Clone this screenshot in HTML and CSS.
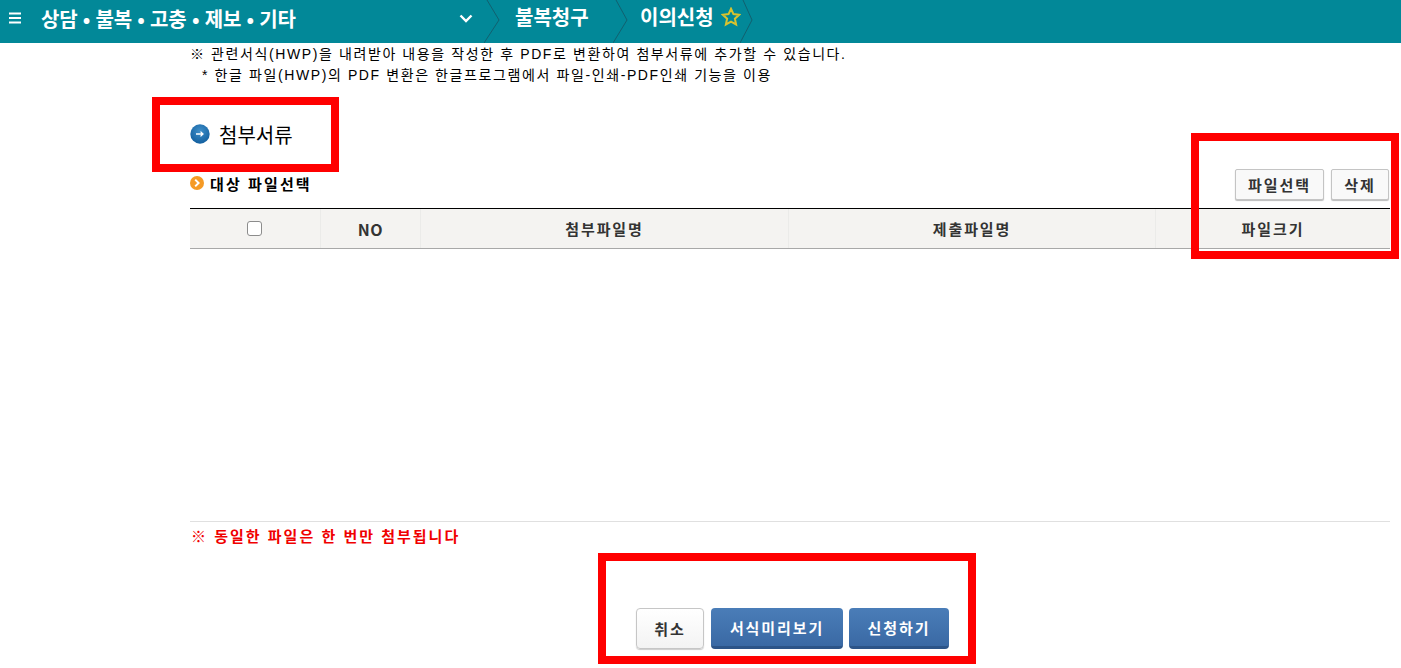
FILE: index.html
```html
<!DOCTYPE html>
<html lang="ko">
<head>
<meta charset="utf-8">
<title>이의신청</title>
<link rel="stylesheet" href="styles.css">
</head>
<body>
<header class="topbar">
  <div class="menu-btn"><svg width="14" height="12" viewBox="0 0 14 12"><path d="M1 1.5h12M1 6h12M1 10.5h12" stroke="#fff" stroke-width="2" fill="none"/></svg></div>
  <div class="crumb crumb-main">
    <span>상담 • 불복 • 고충 • 제보 • 기타</span>
    <svg class="chev" width="14" height="9" viewBox="0 0 14 9"><path d="M1.5 1.5L7 7l5.5-5.5" stroke="#fff" stroke-width="2.4" fill="none"/></svg>
  </div>
  <svg class="sep" width="18" height="43" viewBox="0 0 18 43"><path d="M3 0l12 20L0 43" stroke="#12606f" stroke-width="1" fill="none"/></svg>
  <div class="crumb crumb-second"><span>불복청구</span></div>
  <svg class="sep" width="18" height="43" viewBox="0 0 18 43"><path d="M3 0l11 20L0 43" stroke="#12606f" stroke-width="1" fill="none"/></svg>
  <div class="crumb crumb-third">
    <span>이의신청</span>
    <svg class="star" width="20" height="20" viewBox="0 0 18 18"><path d="M9 1.6l2.2 4.8 5.2.6-3.9 3.500 1.100 5.200L9 13.100l-4.600 2.600 1.100-5.200L1.600 7l5.200-.6z" fill="none" stroke="#d9c22e" stroke-width="1.800"/></svg>
  </div>
  <svg class="sep sep-last" width="18" height="43" viewBox="0 0 18 43"><path d="M3 0l9 20L0 43" stroke="#12606f" stroke-width="1" fill="none"/></svg>
</header>

<main class="content">
  <p class="note">※ 관련서식(HWP)을 내려받아 내용을 작성한 후 PDF로 변환하여 첨부서류에 추가할 수 있습니다.</p>
  <p class="note note-sub">* 한글 파일(HWP)의 PDF 변환은 한글프로그램에서 파일-인쇄-PDF인쇄 기능을 이용</p>

  <h2 class="section-title">
    <svg width="20" height="20" viewBox="0 0 20 20"><defs><radialGradient id="blue" cx="50%" cy="35%" r="65%"><stop offset="0" stop-color="#3f8fc9"/><stop offset="1" stop-color="#125f9f"/></radialGradient></defs><circle cx="10" cy="10" r="9.700" fill="url(#blue)"/><path d="M6 10h7M10.500 7.600L13 10l-2.500 2.400" stroke="#fff" stroke-width="1.300" fill="none"/></svg>
    <span>첨부서류</span>
  </h2>

  <div class="toolbar">
    <div class="sub-title">
      <svg width="14" height="14" viewBox="0 0 14 14"><circle cx="7" cy="7" r="7" fill="#f59a25"/><path d="M5.200 3.600L8.600 7l-3.400 3.400" stroke="#fff" stroke-width="2" fill="none"/></svg>
      <span>대상 파일선택</span>
    </div>
    <div class="tool-btns">
      <button class="btn btn-file" type="button">파일선택</button>
      <button class="btn btn-del" type="button">삭제</button>
    </div>
  </div>

  <div class="file-table">
    <div class="cell cell-check"><span class="checkbox"></span></div>
    <div class="cell cell-no">NO</div>
    <div class="cell">첨부파일명</div>
    <div class="cell">제출파일명</div>
    <div class="cell">파일크기</div>
  </div>

  <div class="list-area"></div>

  <p class="warning">※ 동일한 파일은 한 번만 첨부됩니다</p>

  <div class="actions">
    <button class="btn btn-cancel" type="button">취소</button>
    <button class="btn btn-blue btn-preview" type="button">서식미리보기</button>
    <button class="btn btn-blue btn-apply" type="button">신청하기</button>
  </div>
</main>

<div class="mark mark-title"></div>
<div class="mark mark-tools"></div>
<div class="mark mark-actions"></div>
</body>
</html>
```

FILE: styles.css
```css
* { box-sizing: border-box; }
html, body { margin: 0; padding: 0; }
body {
  width: 1401px;
  height: 668px;
  overflow: hidden;
  background: #fff;
  color: #000;
  font-family: "Noto Sans CJK KR", "Liberation Sans", sans-serif;
}
.topbar {
  display: flex;
  align-items: center;
  height: 43px;
  background: #028898;
  color: #fff;
  font-weight: 700;
  font-size: 20px;
}
.menu-btn { display: flex; width: 41px; padding-left: 8px; padding-bottom: 8px; }
.crumb { display: flex; align-items: center; height: 43px; white-space: nowrap; }
.crumb-main {
  width: 443px;
  justify-content: space-between;
  padding-right: 11px;
  padding-bottom: 6px;
  letter-spacing: -0.2px;
}
.sep { flex: none; display: block; }
.crumb-second { width: 111px; padding-left: 13px; padding-bottom: 10px; }
.crumb-third { padding-left: 9px; padding-bottom: 10px; gap: 7px; width: 113px; }
.sep-last { margin-left: -4px; }
.chev { display: block; }

.content { width: 1200px; margin-left: 190px; padding-top: 1px; }
.note {
  margin: 0;
  height: 21px;
  line-height: 21px;
  font-size: 14px;
  font-family: "Liberation Sans", "Noto Sans CJK KR", sans-serif;
  letter-spacing: 1.6px;
}
.note-sub { padding-left: 12px; }
.section-title {
  display: flex;
  align-items: center;
  gap: 9px;
  margin: 32px 0 0;
  height: 32px;
  font-size: 20px;
  font-weight: 400;
}
.toolbar {
  display: flex;
  justify-content: space-between;
  height: 39px;
  margin-top: 19px;
}
.sub-title {
  display: flex;
  align-items: center;
  gap: 6px;
  height: 28px;
  font-size: 15px;
  font-weight: 700;
  letter-spacing: 2.1px;
}
.tool-btns { display: flex; gap: 7px; padding-right: 1px; }
.btn {
  display: block;
  padding: 0;
  font-family: inherit;
  font-size: 15px;
  font-weight: 700;
  letter-spacing: 1.9px;
  cursor: pointer;
}
.btn-file, .btn-del {
  height: 31px;
  color: #333;
  background: #f9f9f9;
  border: 1px solid #c4c4c4;
  border-radius: 2px;
  box-shadow: 0 1px 1px #bbb;
}
.btn-file { width: 89px; }
.btn-del { width: 58px; }

.file-table {
  display: grid;
  grid-template-columns: 130px 100px 368px 367px 235px;
  height: 41px;
  border-top: 1px solid #000;
  border-bottom: 1px solid #a8a8a8;
  background: #f4f3f1;
  font-size: 15px;
  font-weight: 700;
  letter-spacing: 1.9px;
  color: #333;
}
.cell {
  display: flex;
  align-items: center;
  justify-content: center;
  border-left: 1px solid #ebebe9;
}
.cell:first-child { border-left: 0; }
.cell-no { letter-spacing: 0.5px; font-size: 16px; }
.checkbox {
  display: block;
  width: 15px;
  height: 15px;
  background: #fff;
  border: 1.500px solid #8c8c8c;
  border-radius: 3px;
  margin-right: 2px;
}
.list-area {
  height: 273px;
  border-bottom: 1px solid #e0e0e0;
}
.warning {
  margin: 0;
  height: 30px;
  line-height: 28px;
  padding-left: 1px;
  color: #f00000;
  font-size: 15px;
  font-weight: 700;
  letter-spacing: 2px;
}
.actions {
  display: flex;
  gap: 7px;
  height: 41px;
  margin-top: 56px;
  padding-left: 446px;
}
.btn-cancel {
  width: 68px;
  height: 41px;
  color: #333;
  background: linear-gradient(#fff, #f3f3f3);
  border: 1px solid #c6c6c6;
  border-radius: 4px;
  box-shadow: 0 1px 1px #ccc;
}
.btn-blue {
  height: 41px;
  color: #fff;
  background: linear-gradient(#4a7db8, #3a69a4);
  border: 0;
  border-bottom: 3px solid #2c5488;
  border-radius: 4px;
}
.btn-preview { width: 132px; }
.btn-apply { width: 100px; margin-left: -1px; }

.mark { position: absolute; border: 8px solid #f00; pointer-events: none; }
.mark-title { left: 152px; top: 97px; width: 187px; height: 75px; }
.mark-tools { left: 1191px; top: 133px; width: 208px; height: 126px; }
.mark-actions { left: 598px; top: 553px; width: 378px; height: 111px; }
```
